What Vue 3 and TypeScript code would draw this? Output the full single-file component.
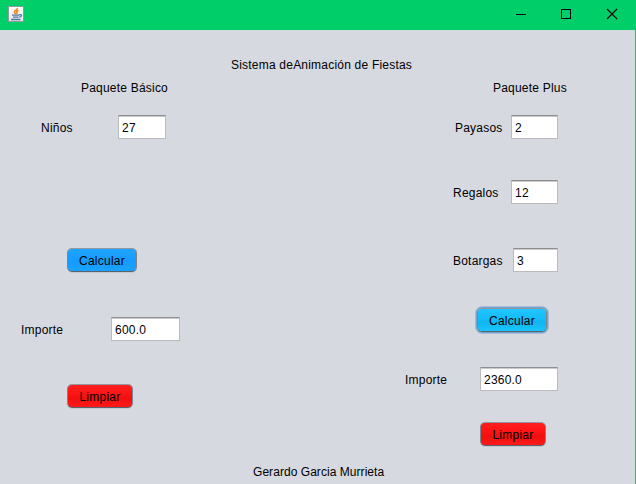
<script setup lang="ts">
import { ref } from 'vue'

const ninos = ref('27')
const importeBasico = ref('600.0')
const payasos = ref('2')
const regalos = ref('12')
const botargas = ref('3')
const importePlus = ref('2360.0')

function calcularBasico(): void {
  importeBasico.value = '600.0'
}
function limpiarBasico(): void {
  ninos.value = ''
  importeBasico.value = ''
}
function calcularPlus(): void {
  importePlus.value = '2360.0'
}
function limpiarPlus(): void {
  payasos.value = ''
  regalos.value = ''
  botargas.value = ''
  importePlus.value = ''
}
</script>

<template>
  <div class="window">
    <header class="titlebar">
      <svg class="java" width="16" height="16" viewBox="0 0 16 16">
        <defs>
          <linearGradient id="tile" x1="0" y1="0" x2="0" y2="1">
            <stop offset="0" stop-color="#ffffff" />
            <stop offset="1" stop-color="#dfe3ea" />
          </linearGradient>
        </defs>
        <rect x="0.5" y="0.5" width="15" height="15" fill="url(#tile)" stroke="#8c9a9c" />
        <path d="M9.2 2C9.6 4.2 6 4.6 6.4 6.3C6.6 7 7.4 7.3 7.5 8.2M10.6 4.2C8.4 5 8.4 5.8 8.9 6.4C9.3 7 8.9 7.5 8.5 8.2" fill="none" stroke="#ee8322" stroke-width="1.5" />
        <path d="M4 9.2H11M5 11.2H10.5M3 13.5H12.5M11 8.8C14.4 7.8 14 10.8 11.2 11.2" fill="none" stroke="#52799b" stroke-width="1.3" />
      </svg>
      <div class="controls">
        <svg width="46" height="30" viewBox="0 0 46 30" shape-rendering="crispEdges"><path d="M18 14.5H28" stroke="#000" /></svg>
        <svg width="46" height="30" viewBox="0 0 46 30" shape-rendering="crispEdges"><rect x="17.5" y="9.5" width="9" height="9" fill="none" stroke="#000" /></svg>
        <svg width="46" height="30" viewBox="0 0 46 30"><path d="M17 9L27 19M27 9L17 19" stroke="#000" stroke-width="1.1" /></svg>
      </div>
    </header>

    <main class="content">
      <h1 class="title"><span>Sistema deAnimación de Fiestas</span></h1>
      <div class="columns">
        <section class="basic">
          <h2>Paquete Básico</h2>
          <div class="row children"><label>Niños</label><input v-model="ninos" /></div>
          <div class="row calc"><button class="blue" @click="calcularBasico">Calcular</button></div>
          <div class="row amount"><label>Importe</label><input v-model="importeBasico" /></div>
          <div class="row clear"><button class="red" @click="limpiarBasico">Limpiar</button></div>
        </section>
        <section class="plus">
          <h2>Paquete Plus</h2>
          <div class="row clowns"><label>Payasos</label><input v-model="payasos" /></div>
          <div class="row gifts"><label>Regalos</label><input v-model="regalos" /></div>
          <div class="row mascots"><label>Botargas</label><input v-model="botargas" /></div>
          <div class="row calc"><button class="blue focused" @click="calcularPlus">Calcular</button></div>
          <div class="row amount"><label>Importe</label><input v-model="importePlus" /></div>
          <div class="row clear"><button class="red" @click="limpiarPlus">Limpiar</button></div>
        </section>
      </div>
      <footer>Gerardo Garcia Murrieta</footer>
    </main>
  </div>
</template>

<style>
body {
  margin: 0;
  overflow: hidden;
}
</style>

<style scoped>
.window {
  width: 636px;
  height: 484px;
  box-sizing: border-box;
  background: #d6d9df;
  border-right: 1px solid #00ce69;
  font: 12px/24px "Liberation Sans", Arial, sans-serif;
  letter-spacing: 0.21px;
  color: #000;
}
.titlebar {
  height: 30px;
  margin-right: -1px;
  background: #00ce69;
  display: flex;
  justify-content: space-between;
}
.java {
  margin: 6px 0 0 8px;
}
.controls {
  display: flex;
}
.content {
  height: 454px;
  display: flex;
  flex-direction: column;
}
h1,
h2 {
  font: inherit;
  margin: 0;
  white-space: nowrap;
}
.title {
  margin-top: 23px;
  height: 23px;
  padding-left: 231px;
}
.columns {
  display: flex;
  height: 384px;
}
.basic {
  width: 400px;
}
.plus {
  width: 235px;
}
.basic h2 {
  padding-left: 81px;
}
.plus h2 {
  padding-left: 93px;
}
.row {
  display: flex;
  height: 24px;
}
label {
  flex: none;
  white-space: nowrap;
  padding-top: 1px;
}
input {
  box-sizing: border-box;
  height: 24px;
  margin: 0;
  padding: 2px 3px 0;
  border: 1px solid #b9bbbf;
  border-top: 1px solid #8d8e8f;
  border-radius: 0;
  background: #fff;
  box-shadow: inset 0 1px #c9caca;
  font: inherit;
  letter-spacing: inherit;
  line-height: 20px;
  color: #000;
  outline: none;
}
button {
  box-sizing: border-box;
  height: 24px;
  padding: 2px 0 0;
  border: 1px solid #7c858f;
  border-top-color: #9097a0;
  border-bottom-color: #59636e;
  border-radius: 5px;
  font: inherit;
  letter-spacing: 0.25px;
  line-height: 20px;
  color: #000;
  box-shadow: 0 1px #c4c8cf;
}
.blue {
  width: 70px;
  background: linear-gradient(#22a5ff, #149bff 55%, #1ca4ff) border-box;
}
.red {
  width: 66px;
  background: linear-gradient(#ff2020, #ff1616 35%, #ef1010 60%, #ff1a1a) border-box;
}
.blue.focused {
  background: linear-gradient(#22c6ff, #17bdf8 40%, #10b4ee 60%, #1cc8ff) border-box;
  box-shadow: 0 0 0 1.5px #73a4d1;
}

.basic .children {
  margin-top: 15px;
  padding-left: 41px;
}
.basic .children label {
  width: 77px;
}
.basic .children input {
  width: 48px;
}
.basic .calc {
  margin-top: 109px;
  padding-left: 67px;
}
.basic .amount {
  margin-top: 45px;
  padding-left: 21px;
}
.basic .amount label {
  width: 90px;
}
.basic .amount input {
  width: 69px;
}
.basic .clear {
  margin-top: 43px;
  padding-left: 67px;
}

.plus .clowns {
  margin-top: 15px;
  padding-left: 55px;
}
.plus .clowns label {
  width: 56px;
}
.plus .clowns input,
.plus .gifts input {
  width: 47px;
}
.plus .gifts {
  margin-top: 41px;
  padding-left: 53px;
}
.plus .gifts label {
  width: 58px;
}
.plus .mascots {
  margin-top: 44px;
  padding-left: 53px;
}
.plus .mascots label {
  width: 60px;
}
.plus .mascots input {
  width: 45px;
}
.plus .calc {
  margin-top: 36px;
  padding-left: 77px;
}
.plus .amount {
  margin-top: 35px;
  padding-left: 5px;
}
.plus .amount label {
  width: 75px;
}
.plus .amount input {
  width: 78px;
}
.plus .clear {
  margin-top: 31px;
  padding-left: 80px;
}
footer {
  padding-left: 253px;
  letter-spacing: 0.05px;
}
</style>
